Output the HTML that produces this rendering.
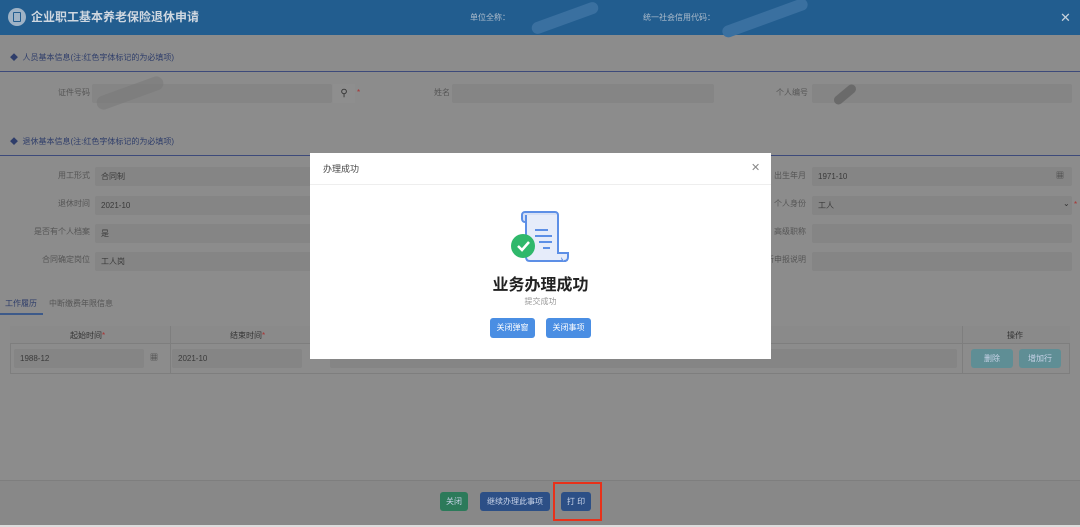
<!DOCTYPE html>
<html><head><meta charset="utf-8"><style>
*{box-sizing:border-box;margin:0;padding:0}
body{width:1080px;height:527px;overflow:hidden;background:#8c8c8c;font-family:"Liberation Sans","Noto Sans CJK SC",sans-serif;position:relative;color:#444}
.a{position:absolute;line-height:1}
.hdr{left:0;top:0;width:1080px;height:35px;background:#225d8f;color:#d8dde4}
.lbl{font-size:8px;color:#555;text-align:right}
.inp{background:#858585;border-radius:2px;height:19px;font-size:8px;color:#3a3a3a;padding:6px 6px}
.sec{font-size:8px;color:#2e3d6a}
.line{height:1px;background:#3d4a7a}
.btn{border-radius:3px;font-size:8px;color:#c8d3e8;text-align:center}
</style></head><body>
<div class="a hdr">
 <div class="a" style="left:8px;top:8px;width:18px;height:18px;border-radius:50%;background:#9fb3c6"></div>
 <div class="a" style="left:13px;top:12px;width:8px;height:10px;border:1.5px solid #225d8f;border-radius:1px"></div>
 <div class="a" style="left:31px;top:11px;font-size:12px;font-weight:bold;color:#cfd7e0">企业职工基本养老保险退休申请</div>
 <div class="a" style="left:470px;top:14px;font-size:8px;color:#aebdcc">单位全称：</div>
 <div class="a" style="left:530px;top:12px;width:70px;height:12px;background:#3a70a0;border-radius:6px;transform:rotate(-20deg)"></div>
 <div class="a" style="left:643px;top:14px;font-size:8px;color:#aebdcc">统一社会信用代码：</div>
 <div class="a" style="left:720px;top:12px;width:90px;height:12px;background:#3a70a0;border-radius:6px;transform:rotate(-20deg)"></div>
 <div class="a" style="left:1060px;top:11px;font-size:13px;color:#c8d2dc">✕</div>
</div>
<div class="a sec" style="left:10px;top:54px">◆ &nbsp;人员基本信息(注:红色字体标记的为必填项)</div>
<div class="a line" style="left:0;top:71px;width:1080px"></div>
<div class="a lbl" style="left:40px;top:89px;width:50px">证件号码</div>
<div class="a inp" style="left:92px;top:84px;width:240px"></div>
<div class="a" style="left:333px;top:84px;width:22px;height:19px;background:#8e8e8e;font-size:10px;text-align:center;line-height:19px;color:#333">⚲</div>
<div class="a" style="left:357px;top:89px;font-size:8px;color:#a33">*</div>
<div class="a" style="left:95px;top:86px;width:70px;height:14px;background:#7a7a7a;border-radius:7px;transform:rotate(-20deg);opacity:.6"></div>
<div class="a lbl" style="left:400px;top:89px;width:50px">姓名</div>
<div class="a inp" style="left:452px;top:84px;width:262px"></div>
<div class="a lbl" style="left:740px;top:89px;width:68px">个人编号</div>
<div class="a inp" style="left:812px;top:84px;width:260px"></div>
<div class="a" style="left:832px;top:90px;width:26px;height:9px;background:#6a6a6a;border-radius:5px;transform:rotate(-40deg)"></div>
<div class="a sec" style="left:10px;top:138px">◆ &nbsp;退休基本信息(注:红色字体标记的为必填项)</div>
<div class="a line" style="left:0;top:155px;width:1080px"></div>
<div class="a lbl" style="left:20px;top:172px;width:70px">用工形式</div>
<div class="a inp" style="left:95px;top:167px;width:220px">合同制</div>
<div class="a lbl" style="left:20px;top:200px;width:70px">退休时间</div>
<div class="a inp" style="left:95px;top:196px;width:220px">2021-10</div>
<div class="a lbl" style="left:20px;top:228px;width:70px">是否有个人档案</div>
<div class="a inp" style="left:95px;top:224px;width:220px">是</div>
<div class="a lbl" style="left:20px;top:256px;width:70px">合同确定岗位</div>
<div class="a inp" style="left:95px;top:252px;width:220px">工人岗</div>
<div class="a lbl" style="left:770px;top:172px;width:36px">出生年月</div>
<div class="a inp" style="left:812px;top:167px;width:260px">1971-10</div>
<div class="a" style="left:1056px;top:172px;font-size:8px;color:#333">▦</div>
<div class="a lbl" style="left:770px;top:200px;width:36px">个人身份</div>
<div class="a inp" style="left:812px;top:196px;width:260px">工人</div>
<div class="a" style="left:1063px;top:200px;font-size:8px;color:#333">⌄</div>
<div class="a" style="left:1074px;top:201px;font-size:8px;color:#a33">*</div>
<div class="a lbl" style="left:770px;top:228px;width:36px">高级职称</div>
<div class="a inp" style="left:812px;top:224px;width:260px"></div>
<div class="a lbl" style="left:760px;top:256px;width:46px">新申报说明</div>
<div class="a inp" style="left:812px;top:252px;width:260px"></div>
<div class="a" style="left:5px;top:300px;font-size:8px;color:#2e3d6a">工作履历</div>
<div class="a" style="left:49px;top:300px;font-size:8px;color:#555">中断缴费年限信息</div>
<div class="a" style="left:0;top:313px;width:43px;height:2px;background:#3d5a8a"></div>
<div class="a" style="left:10px;top:326px;width:1060px;height:48px;border:1px solid #7e7e7e"></div>
<div class="a" style="left:10px;top:326px;width:1060px;height:18px;border-bottom:1px solid #7e7e7e;background:#8a8a8a"></div>
<div class="a" style="left:170px;top:326px;width:1px;height:48px;background:#7e7e7e"></div>
<div class="a" style="left:962px;top:326px;width:1px;height:48px;background:#7e7e7e"></div>
<div class="a" style="left:70px;top:332px;font-size:8px;color:#333">起始时间<span style="color:#a33">*</span></div>
<div class="a" style="left:230px;top:332px;font-size:8px;color:#333">结束时间<span style="color:#a33">*</span></div>
<div class="a" style="left:1007px;top:332px;font-size:8px;color:#333">操作</div>
<div class="a inp" style="left:14px;top:349px;width:130px">1988-12</div>
<div class="a" style="left:150px;top:354px;font-size:8px;color:#333">▦</div>
<div class="a inp" style="left:172px;top:349px;width:130px">2021-10</div>
<div class="a inp" style="left:330px;top:349px;width:627px"></div>
<div class="a btn" style="left:971px;top:349px;width:42px;height:19px;background:#5f8e95;line-height:19px">删除</div>
<div class="a btn" style="left:1019px;top:349px;width:42px;height:19px;background:#5f8e95;line-height:19px">增加行</div>
<div class="a" style="left:0;top:480px;width:1080px;height:1px;background:#7e7e7e"></div>
<div class="a" style="left:0;top:481px;width:1080px;height:44px;background:#888"></div>
<div class="a btn" style="left:440px;top:492px;width:28px;height:19px;background:#2c7a5a;line-height:19px">关闭</div>
<div class="a btn" style="left:480px;top:492px;width:70px;height:19px;background:#2c4f86;line-height:19px">继续办理此事项</div>
<div class="a btn" style="left:561px;top:492px;width:30px;height:19px;background:#2c4f86;line-height:19px">打 印</div>
<div class="a" style="left:553px;top:482px;width:49px;height:39px;border:2px solid #e8311a"></div>
<div class="a" style="left:0;top:525px;width:1080px;height:2px;background:#ddd"></div>

<div class="a" style="left:310px;top:153px;width:461px;height:206px;background:#fff">
 <div class="a" style="left:13px;top:12px;font-size:9px;color:#444">办理成功</div>
 <div class="a" style="left:441px;top:10px;font-size:11px;color:#888">✕</div>
 <div class="a" style="left:0;top:31px;width:461px;height:1px;background:#eee"></div>
 <svg class="a" style="left:200px;top:56px" width="62" height="56" viewBox="0 0 62 56">
  <rect x="12" y="3" width="36" height="10" rx="3" fill="#d6e0f5" stroke="#5d8fe6" stroke-width="2"/>
  <path d="M16 6 V48 Q16 52 20 52 H56 Q52 52 52 48 V44 H48 V6" fill="#e6ecfa" stroke="#5d8fe6" stroke-width="2"/>
  <path d="M48 44 H58 V48 Q58 52 54 52" fill="#e6ecfa" stroke="#5d8fe6" stroke-width="2"/>
  <path d="M25 21 H38 M25 27 H42 M29 33 H42 M33 39 H40" stroke="#5d8fe6" stroke-width="2"/>
  <circle cx="13" cy="37" r="12" fill="#2fb86b"/>
  <path d="M8 37 L12 41 L19 33" stroke="#fff" stroke-width="2.5" fill="none"/>
 </svg>
 <div class="a" style="left:0;top:125px;width:461px;text-align:center;font-size:16px;font-weight:bold;color:#222">业务办理成功</div>
 <div class="a" style="left:0;top:145px;width:461px;text-align:center;font-size:8px;color:#999">提交成功</div>
 <div class="a btn" style="left:180px;top:165px;width:45px;height:20px;background:#4a8ee3;color:#fff;line-height:20px">关闭弹窗</div>
 <div class="a btn" style="left:236px;top:165px;width:45px;height:20px;background:#4a8ee3;color:#fff;line-height:20px">关闭事项</div>
</div>
</body></html>
